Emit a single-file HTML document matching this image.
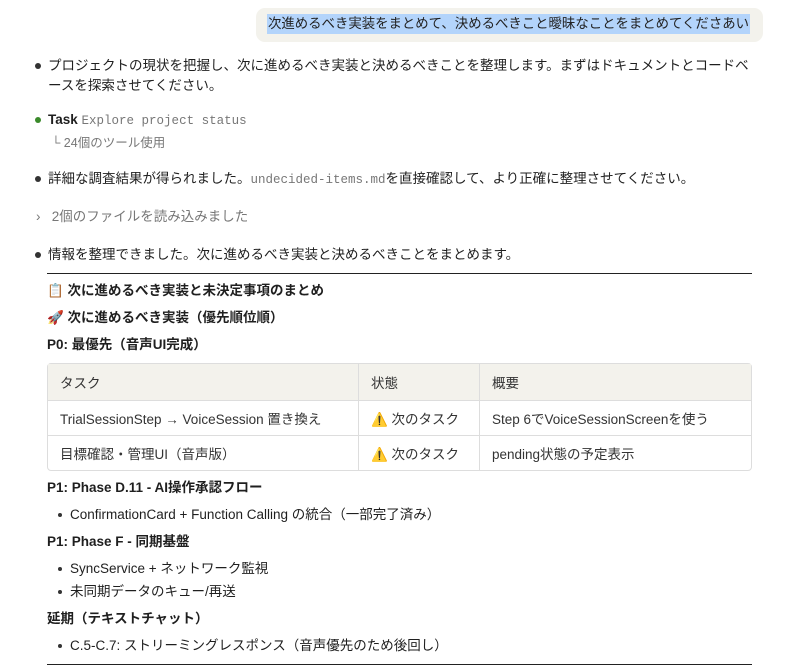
<!DOCTYPE html>
<html><head><meta charset="utf-8"><style>
body{margin:0;width:792px;height:672px;background:#fff;font-family:"Liberation Sans","Noto Sans CJK JP",sans-serif;font-size:13.5px;color:#1f1f1f;position:relative;overflow:hidden}
.a{position:absolute;line-height:20px;white-space:nowrap}
.m{font-family:"Liberation Mono","Noto Sans CJK JP",monospace;color:#777;font-size:12.5px}
.g{color:#777}
.b{font-weight:bold}
.dot{position:absolute;width:6px;height:6px;border-radius:50%;background:#333}
.hr{position:absolute;left:47px;width:705px;height:1px;background:#222}
table{position:absolute;left:47px;top:363px;width:705px;border-collapse:separate;border-spacing:0;border:1px solid #ddd;border-radius:4px;font-size:13.5px}
td{border-right:1px solid #ddd;border-bottom:1px solid #ddd;padding:0 12px;height:34px;color:#333}
tr td:last-child{border-right:none}
tr:last-child td{border-bottom:none}
tr.h td{background:#f3f2ec;height:36px}
.li{position:absolute;width:4px;height:4px;border-radius:50%;background:#333}
</style></head><body>
<div style="position:absolute;left:256px;top:8px;width:507px;height:34px;background:#f3f2ec;border-radius:9px"></div>
<div class="a" style="left:267px;top:14px;background:#b3d4fb;padding:0 1px;color:#222;font-size:13.4px">次進めるべき実装をまとめて、決めるべきこと曖昧なことをまとめてくださあい</div>

<div class="dot" style="left:35px;top:63px"></div>
<div class="a" style="left:48px;top:56px">プロジェクトの現状を把握し、次に進めるべき実装と決めるべきことを整理します。まずはドキュメントとコードベ</div>
<div class="a" style="left:48px;top:76px">ースを探索させてください。</div>

<div class="dot" style="left:35px;top:117px;background:#3a8a2a"></div>
<div class="a" style="left:48px;top:110px"><span class="b">Task</span> <span class="m">Explore project status</span></div>
<div class="a g" style="left:48px;top:133px;font-size:12.5px">&nbsp;└ 24個のツール使用</div>

<div class="dot" style="left:35px;top:176px"></div>
<div class="a" style="left:48px;top:169px">詳細な調査結果が得られました。<span class="m">undecided-items.md</span>を直接確認して、より正確に整理させてください。</div>

<div class="a g" style="left:36px;top:207px">›&nbsp;&nbsp; 2個のファイルを読み込みました</div>

<div class="dot" style="left:35px;top:252px"></div>
<div class="a" style="left:48px;top:245px">情報を整理できました。次に進めるべき実装と決めるべきことをまとめます。</div>

<div class="hr" style="top:273px"></div>
<div class="a b" style="left:47px;top:281px">📋 次に進めるべき実装と未決定事項のまとめ</div>
<div class="a b" style="left:47px;top:308px">🚀 次に進めるべき実装（優先順位順）</div>
<div class="a b" style="left:47px;top:335px">P0: 最優先（音声UI完成）</div>

<table>
<tr class="h"><td style="width:286px">タスク</td><td style="width:96px">状態</td><td>概要</td></tr>
<tr><td>TrialSessionStep → VoiceSession 置き換え</td><td>⚠️ 次のタスク</td><td>Step 6でVoiceSessionScreenを使う</td></tr>
<tr><td>目標確認・管理UI（音声版）</td><td>⚠️ 次のタスク</td><td>pending状態の予定表示</td></tr>
</table>

<div class="a b" style="left:47px;top:478px">P1: Phase D.11 - AI操作承認フロー</div>
<div class="li" style="left:58px;top:513px"></div>
<div class="a" style="left:70px;top:505px">ConfirmationCard + Function Calling の統合（一部完了済み）</div>
<div class="a b" style="left:47px;top:532px">P1: Phase F - 同期基盤</div>
<div class="li" style="left:58px;top:567px"></div>
<div class="a" style="left:70px;top:559px">SyncService + ネットワーク監視</div>
<div class="li" style="left:58px;top:590px"></div>
<div class="a" style="left:70px;top:582px">未同期データのキュー/再送</div>
<div class="a b" style="left:47px;top:609px">延期（テキストチャット）</div>
<div class="li" style="left:58px;top:644px"></div>
<div class="a" style="left:70px;top:636px">C.5-C.7: ストリーミングレスポンス（音声優先のため後回し）</div>
<div class="hr" style="top:664px"></div>
</body></html>
